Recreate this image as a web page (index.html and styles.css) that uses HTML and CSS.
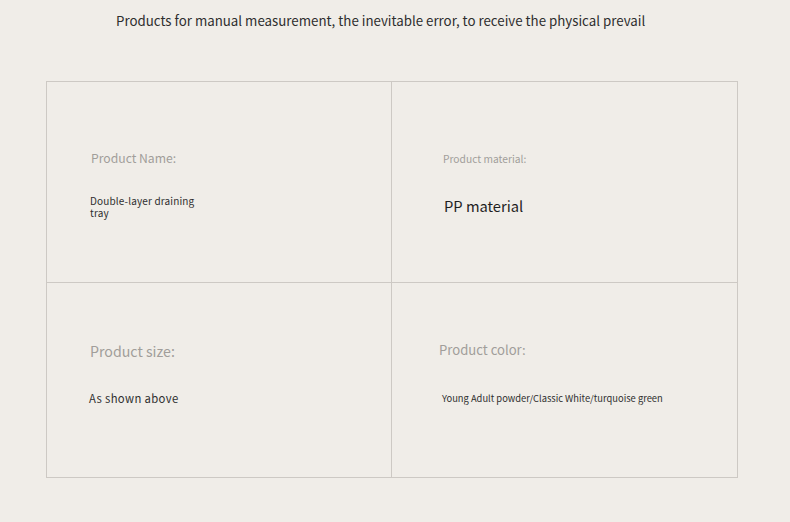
FILE: index.html
```html
<!DOCTYPE html>
<html lang="en">
<head>
<meta charset="utf-8">
<link rel="stylesheet" href="styles.css">
</head>
<body>
<div class="page">
  <p class="intro">Products for manual measurement, the inevitable error, to receive the physical prevail</p>
  <div class="grid">
    <div class="cell c1">
      <div class="label l1">Product Name:</div>
      <div class="value v1">Double-layer draining tray</div>
    </div>
    <div class="cell c2">
      <div class="label l2">Product material:</div>
      <div class="value v2">PP material</div>
    </div>
    <div class="cell c3">
      <div class="label l3">Product size:</div>
      <div class="value v3">As shown above</div>
    </div>
    <div class="cell c4">
      <div class="label l4">Product color:</div>
      <div class="value v4">Young Adult powder/Classic White/turquoise green</div>
    </div>
  </div>
</div>
</body>
</html>
```
FILE: styles.css
```css
html, body {
  margin: 0;
  padding: 0;
  background: #f0ede8;
}
body {
  font-family: "Noto Sans CJK SC", "Noto Sans", sans-serif;
  color: #333;
  width: 790px;
  height: 522px;
  overflow: hidden;
}
.page {
  padding: 12px 0 0 46px;
}
.intro {
  margin: 0 0 0 70px;
  font-size: 13.3px;
  line-height: 18px;
  color: #2e2e2e;
}
.grid {
  margin-top: 51px;
  width: 690px;
  display: grid;
  grid-template-columns: 345px 345px;
  grid-template-rows: 201px 194px;
  border: 1.5px solid #cdc9c4;
  box-sizing: content-box;
}
.cell {
  display: flex;
  flex-direction: column;
  align-items: flex-start;
}
.c1, .c3 { border-right: 1.5px solid #cdc9c4; }
.c1, .c2 { border-bottom: 1.5px solid #cdc9c4; }
.label {
  color: #a19e9a;
  white-space: nowrap;
}
.value {
  color: #2f2f2f;
}
.c1 { padding: 68px 0 0 44px; }
.l1 { font-size: 12.2px; line-height: 17px; }
.v1 { margin-top: 28px; font-size: 10px; line-height: 12px; width: 112px; letter-spacing: 0.15px; margin-left: -1px; }
.c2 { padding: 70px 0 0 51px; }
.l2 { font-size: 10.25px; line-height: 14px; }
.v2 { margin-top: 30px; font-size: 14.7px; line-height: 20px; margin-left: 1px; color: #1f1f1f; }
.c3 { padding: 58px 0 0 43px; }
.l3 { font-size: 14.2px; line-height: 20px; }
.v3 { margin-top: 30px; font-size: 11.3px; line-height: 14px; margin-left: -1px; letter-spacing: 0.35px; }
.c4 { padding: 57px 0 0 47px; }
.l4 { font-size: 13.1px; line-height: 20px; }
.v4 { margin-top: 32px; font-size: 9.35px; line-height: 13px; margin-left: 3px; white-space: nowrap; }
```
